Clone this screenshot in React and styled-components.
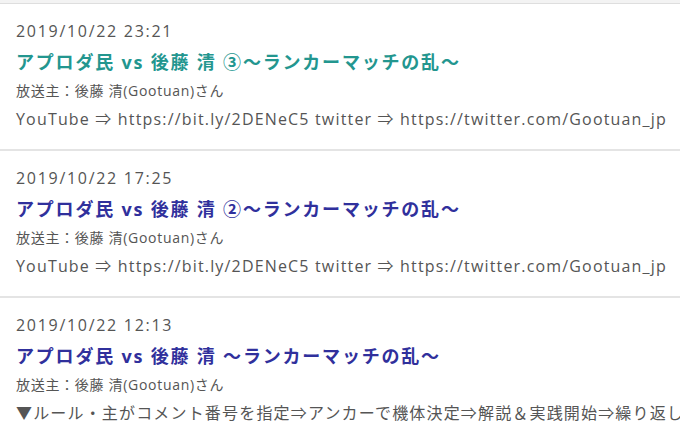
import styled, { createGlobalStyle } from "styled-components";

const GlobalStyle = createGlobalStyle`
  html, body {
    margin: 0;
    padding: 0;
    background: #ffffff;
  }
  body {
    font-family: "Open Sans", "Noto Sans CJK JP", sans-serif;
  }
`;

const Page = styled.div`
  width: 680px;
  height: 441px;
  overflow: hidden;
  background: #fff;
  border-top: 3px solid #f3f3f3;
`;

const List = styled.ul`
  list-style: none;
  margin: 0;
  padding: 0;
  border-top: 1px solid #dedede;
`;

const Item = styled.li`
  padding: 15px 16px 0;
  height: 130px;
  border-bottom: 2px solid #e4e4e4;
  white-space: nowrap;
  overflow: hidden;
`;

const Date = styled.div`
  font-size: 16px;
  line-height: 24px;
  color: #555;
  letter-spacing: 1.7px;
`;

const Title = styled.a`
  display: block;
  margin-top: 7px;
  font-size: 18px;
  line-height: 24px;
  font-weight: bold;
  letter-spacing: 1.8px;
  text-decoration: none;
  color: ${({ visited }) => (visited ? "#23968f" : "#30309c")};
`;

const Owner = styled.div`
  margin-top: 6px;
  font-size: 14px;
  line-height: 22px;
  letter-spacing: 0.7px;
  color: #555;
`;

const Desc = styled.div`
  margin-top: 6px;
  font-size: 16px;
  line-height: 22px;
  letter-spacing: 1.17px;
  color: #555;
`;

const items = [
  {
    date: "2019/10/22 23:21",
    title: "アプロダ民 vs 後藤 清 ③～ランカーマッチの乱～",
    visited: true,
    desc: "YouTube ⇒ https://bit.ly/2DENeC5 twitter ⇒ https://twitter.com/Gootuan_jp",
  },
  {
    date: "2019/10/22 17:25",
    title: "アプロダ民 vs 後藤 清 ②～ランカーマッチの乱～",
    desc: "YouTube ⇒ https://bit.ly/2DENeC5 twitter ⇒ https://twitter.com/Gootuan_jp",
  },
  {
    date: "2019/10/22 12:13",
    title: "アプロダ民 vs 後藤 清 ～ランカーマッチの乱～",
    desc: "▼ルール・主がコメント番号を指定⇒アンカーで機体決定⇒解説＆実践開始⇒繰り返し",
  },
];

export default function App() {
  return (
    <>
      <GlobalStyle />
      <Page>
        <List>
          {items.map((it) => (
            <Item key={it.date}>
              <Date>{it.date}</Date>
              <Title href="#" visited={it.visited}>
                {it.title}
              </Title>
              <Owner>放送主：後藤 清(Gootuan)さん</Owner>
              <Desc>{it.desc}</Desc>
            </Item>
          ))}
        </List>
      </Page>
    </>
  );
}
